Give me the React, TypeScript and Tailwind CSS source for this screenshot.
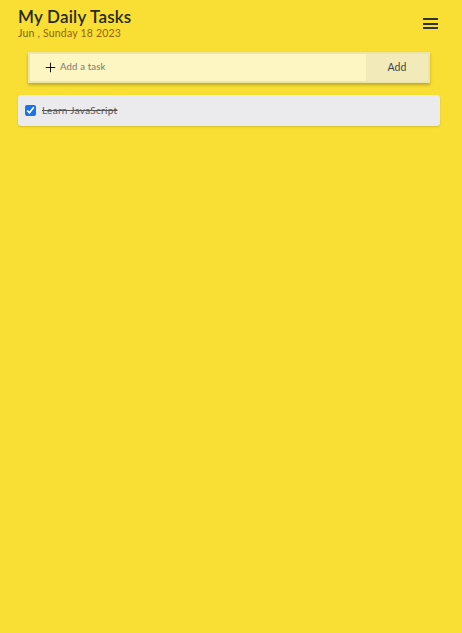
import { Plus } from "lucide-react";

export default function App() {
  return (
    <div
      className="min-h-[633px] w-full bg-[#f9df33] text-[#222]"
      style={{ fontFamily: "Lato, 'Open Sans', sans-serif" }}
    >
      {/* Header */}
      <div className="flex items-start justify-between pl-[18px] pr-[24px] pt-[6px]">
        <div>
          <h1 className="text-[17px] font-semibold leading-[21px] tracking-[0.2px] text-[#2a2a1a]">My Daily Tasks</h1>
          <p className="text-[10.5px] leading-[12px] tracking-[0.2px]">
            <span className="text-[#6f6a22]">Jun , </span>
            <span className="text-[#946312]">Sunday 18 2023</span>
          </p>
        </div>
        <button className="mt-[12px] flex flex-col gap-[2.5px]">
          <span className="block h-[2px] w-[15px] bg-[#333]" />
          <span className="block h-[2px] w-[15px] bg-[#333]" />
          <span className="block h-[2px] w-[15px] bg-[#333]" />
        </button>
      </div>

      {/* Add task bar */}
      <div className="px-[28px] pt-[13px]">
        <div className="flex h-[31px] w-[402px] border-2 border-[#ede4a8] shadow-[0_2px_3px_rgba(0,0,0,0.25)]">
          <div className="flex flex-1 items-center bg-[#fdf5c2] pl-[13px]">
            <Plus size={15} strokeWidth={1.6} className="text-[#111]" />
            <span className="ml-[2px] text-[9.5px] tracking-[0.2px] text-[#777]">Add a task</span>
          </div>
          <button className="w-[62px] bg-[#f2eab9] text-[10.5px] text-[#444]">Add</button>
        </div>
      </div>

      {/* Task list */}
      <div className="px-[18px] pt-[12px] pr-[22px]">
        <div className="flex h-[31px] items-center rounded-[3px] bg-[#ebebee] pl-[7px] shadow-[0_1px_2px_rgba(0,0,0,0.15)]">
          <input type="checkbox" checked readOnly className="h-[11px] w-[11px] accent-[#1a73e8]" />
          <span className="ml-[6px] text-[10px] tracking-[0.3px] text-[#555] line-through">Learn JavaScript</span>
        </div>
      </div>
    </div>
  );
}
